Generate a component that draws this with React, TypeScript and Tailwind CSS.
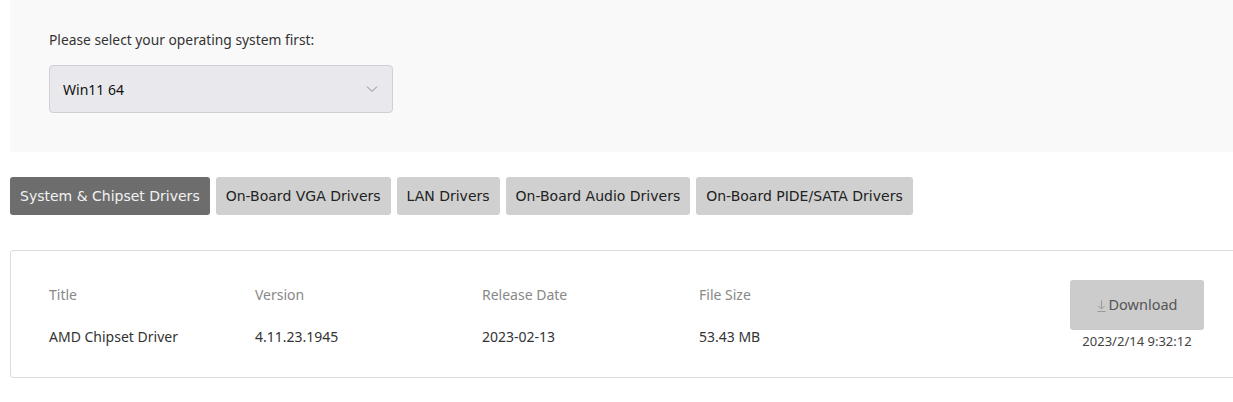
const tabs = [
  'System & Chipset Drivers',
  'On-Board VGA Drivers',
  'LAN Drivers',
  'On-Board Audio Drivers',
  'On-Board PIDE/SATA Drivers',
]

export default function App() {
  return (
    <div className="w-full overflow-hidden bg-white">
      <div className="w-[1260px] pl-[10px] font-['Noto_Sans',sans-serif]">
        {/* OS picker */}
        <div className="h-[152px] bg-[#f9f9f9] pl-[39px] pt-[30px]">
          <p className="text-[13.8px] leading-[20px] text-[#333]">Please select your operating system first:</p>
          <div className="mt-[15px] flex h-[48px] w-[344px] items-center justify-between rounded-[4px] border border-[#cfcfd6] bg-[#e9e9ed] pl-[13px] pr-[14px]">
            <span className="text-[14px] text-[#111]">Win11 64</span>
            <svg width="12" height="8" viewBox="0 0 12 8" fill="none">
              <path d="M1 1.5L6 6.5L11 1.5" stroke="#8a8a8a" strokeWidth="1" />
            </svg>
          </div>
        </div>

        {/* tabs */}
        <div className="mt-[25px] flex gap-[6px] font-['DejaVu_Sans',sans-serif]">
          {tabs.map((t, i) => (
            <div
              key={t}
              className={`flex h-[38px] items-center rounded-[3px] px-[10px] text-[14px] ${
                i === 0 ? 'bg-[#6d6d6d] text-[#f2f2f2]' : 'bg-[#d0d0d0] text-[#222]'
              }`}
            >
              {t}
            </div>
          ))}
        </div>

        {/* driver list */}
        <div className="mt-[35px] flex h-[128px] items-start rounded-[3px] border border-[#dcdcdc] pl-[38px]">
          <div className="mt-[34px] grid flex-1 grid-cols-[206px_227px_217px_1fr] gap-y-[22px] text-[14px] leading-[20px]">
            <span className="text-[#888]">Title</span>
            <span className="text-[#888]">Version</span>
            <span className="text-[#888]">Release Date</span>
            <span className="text-[#888]">File Size</span>
            <span className="text-[#333]">AMD Chipset Driver</span>
            <span className="text-[#333]">4.11.23.1945</span>
            <span className="text-[#333]">2023-02-13</span>
            <span className="text-[#333]">53.43 MB</span>
          </div>
          <div className="mr-[55px] mt-[29px] flex w-[134px] flex-col items-center">
            <div className="flex h-[50px] w-[134px] items-center justify-center gap-[3px] rounded-[3px] bg-[#cccccc] text-[14.5px] text-[#555]">
              <svg width="9" height="12" viewBox="0 0 9 12" fill="none" className="mt-[2px]">
                <path d="M4.5 0.5V9M1.5 6L4.5 9L7.5 6M0.5 11.5H8.5" stroke="#9a9a9a" strokeWidth="1" />
              </svg>
              <span>Download</span>
            </div>
            <span className="mt-[2px] text-[13px] leading-[18px] text-[#444]">2023/2/14 9:32:12</span>
          </div>
        </div>
      </div>
    </div>
  )
}
